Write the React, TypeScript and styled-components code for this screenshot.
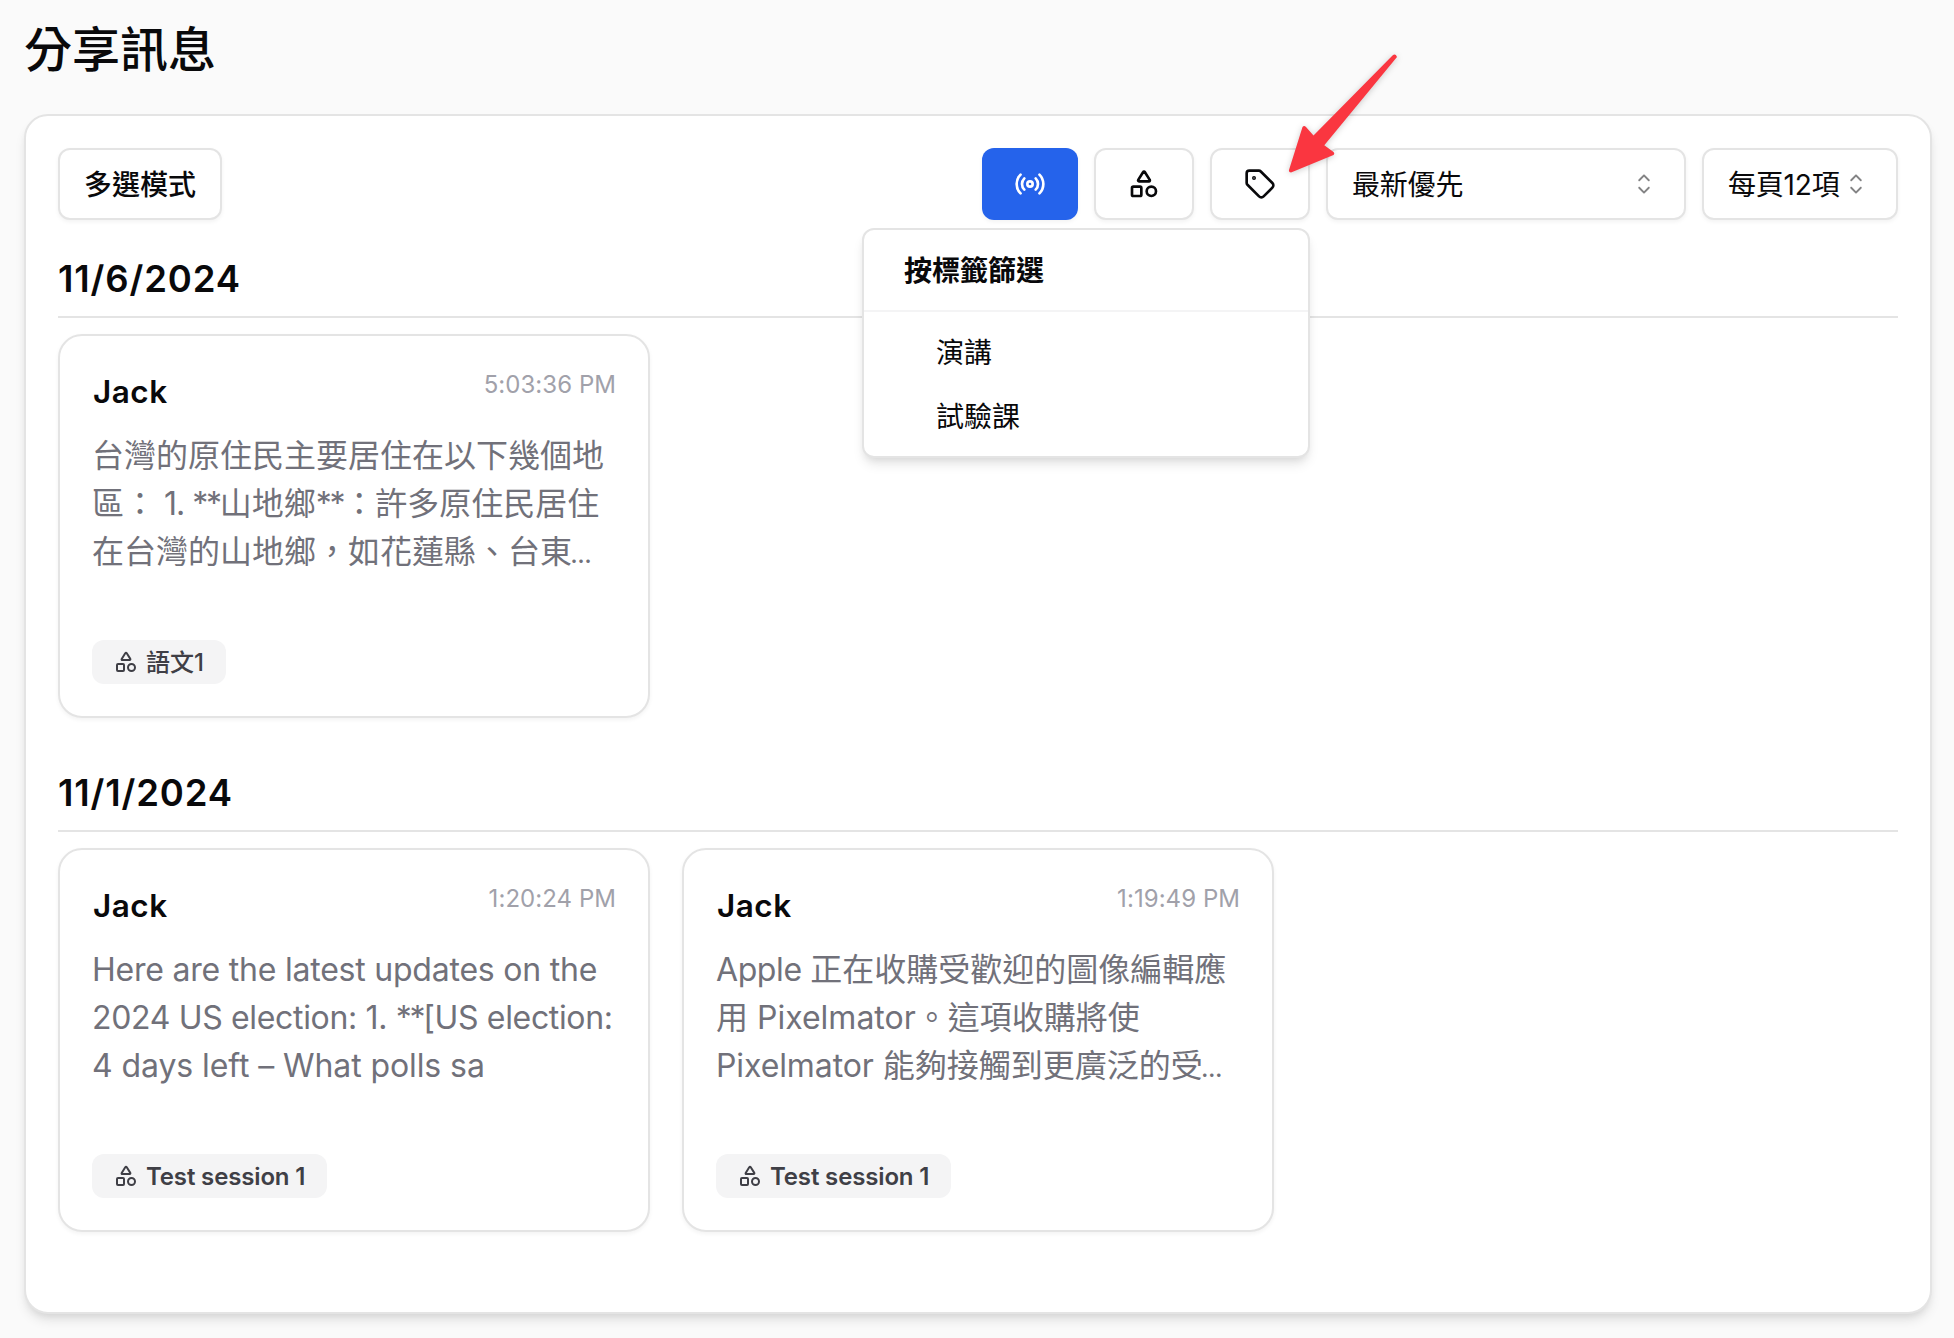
import React from "react";
import styled, { createGlobalStyle, css } from "styled-components";
import { Radio, Shapes, Tag } from "lucide-react";
import { RxCaretSort } from "react-icons/rx";

const GlobalStyle = createGlobalStyle`
  * { box-sizing: border-box; }
  body {
    margin: 0;
    background: #fafafa;
    color: #09090b;
    font-family: Inter, "Noto Sans CJK TC", sans-serif;
  }
`;

const Page = styled.main`
  position: relative;
  height: 1338px;
  padding: 18px 22px 24px 24px;
  display: flex;
  flex-direction: column;
`;

const Title = styled.h1`
  margin: 0 0 32px;
  font-size: 48px;
  line-height: 64px;
  font-weight: 500;
`;

const Panel = styled.section`
  height: 1200px;
  padding: 32px;
  background: #fff;
  border: 2px solid #e4e4e4;
  border-radius: 24px;
  box-shadow: 0 8px 12px -2px rgba(0, 0, 0, 0.1), 0 4px 8px -4px rgba(0, 0, 0, 0.1);
`;

const Toolbar = styled.div`
  display: flex;
  align-items: center;
  justify-content: space-between;
`;

const Filters = styled.div`
  display: flex;
  gap: 16px;
`;

const control = css`
  height: 72px;
  border: 2px solid #e4e4e4;
  border-radius: 12px;
  background: #fff;
  box-shadow: 0 2px 4px rgba(0, 0, 0, 0.05);
  font-family: inherit;
  font-size: 28px;
  color: #09090b;
  white-space: nowrap;
`;

const TextButton = styled.button`
  ${control}
  padding: 0 24px 2px;
  font-weight: 500;
`;

const IconButton = styled.button<{ $active?: boolean }>`
  ${control}
  display: flex;
  align-items: center;
  justify-content: center;
  width: 100px;
  padding: 0;
  ${(p) =>
    p.$active &&
    css`
      width: 96px;
      border: 0;
      color: #fff;
      background: #2563eb;
    `}
`;

const Select = styled.button<{ $width: number }>`
  ${control}
  display: flex;
  align-items: center;
  justify-content: space-between;
  width: ${(p) => p.$width}px;
  padding: 0 24px;
  letter-spacing: -0.2px;

  svg {
    flex: none;
    opacity: 0.5;
  }
`;

const SelectValue = styled.span`
  padding-bottom: 2px;
`;

const MenuAnchor = styled.div`
  position: relative;
`;

const Menu = styled.div`
  position: absolute;
  top: 80px;
  right: 0;
  z-index: 2;
  width: 448px;
  padding: 8px 0;
  background: #fff;
  border: 2px solid #e4e4e4;
  border-radius: 12px;
  box-shadow: 0 8px 12px -2px rgba(0, 0, 0, 0.1), 0 4px 8px -4px rgba(0, 0, 0, 0.1);
  font-size: 28px;
  line-height: 66px;
`;

const MenuLabel = styled.div`
  height: 64px;
  padding: 0 40px;
  font-weight: 600;
`;

const MenuSeparator = styled.div`
  height: 2px;
  margin: 8px 0;
  background: #f4f4f5;
`;

const MenuItem = styled.div`
  height: 64px;
  padding: 0 72px;
`;

const Group = styled.section`
  margin-top: 32px;

  & + & {
    margin-top: 48px;
  }
`;

const DateHeading = styled.h2`
  height: 66px;
  margin: 0 0 16px;
  border-bottom: 2px solid #e4e4e4;
  font-size: 36.5px;
  line-height: 54px;
  font-weight: 600;
  letter-spacing: 0.85px;
`;

const Cards = styled.div`
  display: grid;
  grid-template-columns: repeat(3, minmax(0, 1fr));
  gap: 32px;
`;

const CardBox = styled.article`
  display: flex;
  flex-direction: column;
  align-items: flex-start;
  height: 384px;
  padding: 32px;
  background: #fff;
  border: 2px solid #e4e4e4;
  border-radius: 24px;
  box-shadow: 0 2px 4px rgba(0, 0, 0, 0.05);
`;

const CardHeader = styled.header`
  display: flex;
  justify-content: space-between;
  align-items: flex-start;
  width: 100%;
  height: 64px;
`;

const Name = styled.h3`
  margin: 0;
  padding-left: 1px;
  font-size: 31.5px;
  line-height: 48px;
  font-weight: 600;
  letter-spacing: 0.5px;
`;

const Time = styled.time`
  padding-top: 1px;
  font-size: 24px;
  line-height: 32px;
  letter-spacing: 0.05px;
  color: #a1a1aa;
`;

const Body = styled.p`
  margin: 0;
  font-size: 32px;
  line-height: 48px;
  height: 48px;
  color: #71717a;
  white-space: pre;
`;

const Latin = styled.span<{ $spacing: number }>`
  letter-spacing: ${(p) => p.$spacing}px;
`;

const Stars = styled.span`
  letter-spacing: -2.3px;
`;

const Ellipsis = styled.span`
  margin-left: -1.5px;
  font-size: 22px;
  font-weight: 600;
`;

const Chip = styled.span`
  display: inline-flex;
  align-items: center;
  gap: 8px;
  height: 44px;
  margin-top: auto;
  padding: 0 22px;
  border-radius: 12px;
  background: #f4f4f5;
  color: #3f3f46;
  font-size: 24px;
  font-weight: 500;
`;

const ChipText = styled.span<{ $latin: boolean }>`
  ${(p) =>
    p.$latin
      ? css`
          font-weight: 600;
          letter-spacing: -0.15px;
        `
      : css`
          padding-bottom: 3px;
        `}
`;

const Arrow = styled.svg`
  position: absolute;
  left: 1270px;
  top: 40px;
  z-index: 3;
  filter: drop-shadow(0 1px 3px rgba(0, 0, 0, 0.2));
`;

type Line = { text: string; spacing?: number };
type Message = { time: string; lines: Line[]; session: string };

const groups: { date: string; messages: Message[] }[] = [
  {
    date: "11/6/2024",
    messages: [
      {
        time: "5:03:36 PM",
        lines: [
          { text: "台灣的原住民主要居住在以下幾個地" },
          { text: "區： 1. **山地鄉**：許多原住民居住", spacing: -1 },
          { text: "在台灣的山地鄉，如花蓮縣、台東…" },
        ],
        session: "語文1",
      },
    ],
  },
  {
    date: "11/1/2024",
    messages: [
      {
        time: "1:20:24 PM",
        lines: [
          { text: "Here are the latest updates on the", spacing: -0.22 },
          { text: "2024 US election: 1. **[US election:", spacing: -0.34 },
          { text: "4 days left – What polls sa", spacing: -0.09 },
        ],
        session: "Test session 1",
      },
      {
        time: "1:19:49 PM",
        lines: [
          { text: "Apple 正在收購受歡迎的圖像編輯應", spacing: -0.4 },
          { text: "用 Pixelmator。這項收購將使" },
          { text: "Pixelmator 能夠接觸到更廣泛的受…", spacing: -0.1 },
        ],
        session: "Test session 1",
      },
    ],
  },
];

function BodyLine({ text, spacing = 0 }: Line) {
  const runs = text.split(/(\*+|…|[\x20-\x29\x2b-\x7e–]+)/).filter(Boolean);
  return (
    <Body>
      {runs.map((run, i) => {
        if (run === "…") return <Ellipsis key={i}>{run}</Ellipsis>;
        if (run[0] === "*") return <Stars key={i}>{run}</Stars>;
        if (/^[\x20-\x7e–]/.test(run))
          return (
            <Latin key={i} $spacing={spacing}>
              {run}
            </Latin>
          );
        return run;
      })}
    </Body>
  );
}

function MessageCard({ time, lines, session }: Message) {
  return (
    <CardBox>
      <CardHeader>
        <Name>Jack</Name>
        <Time>{time}</Time>
      </CardHeader>
      {lines.map((line) => (
        <BodyLine key={line.text} {...line} />
      ))}
      <Chip>
        <Shapes size={24} />
        <ChipText $latin={/^[A-Z]/.test(session)}>{session}</ChipText>
      </Chip>
    </CardBox>
  );
}

export default function App() {
  return (
    <Page>
      <GlobalStyle />
      <Title>分享訊息</Title>
      <Panel>
        <Toolbar>
          <TextButton>多選模式</TextButton>
          <Filters>
            <IconButton $active>
              <Radio size={32} />
            </IconButton>
            <IconButton>
              <Shapes size={32} />
            </IconButton>
            <MenuAnchor>
              <IconButton>
                <Tag size={32} />
              </IconButton>
              <Menu>
                <MenuLabel>按標籤篩選</MenuLabel>
                <MenuSeparator />
                <MenuItem>演講</MenuItem>
                <MenuItem>試驗課</MenuItem>
              </Menu>
            </MenuAnchor>
            <Select $width={360}>
              <SelectValue>最新優先</SelectValue>
              <RxCaretSort size={32} />
            </Select>
            <Select $width={196}>
              <SelectValue>每頁12項</SelectValue>
              <RxCaretSort size={32} />
            </Select>
          </Filters>
        </Toolbar>
        {groups.map((group) => (
          <Group key={group.date}>
            <DateHeading>{group.date}</DateHeading>
            <Cards>
              {group.messages.map((m) => (
                <MessageCard key={m.time} {...m} />
              ))}
            </Cards>
          </Group>
        ))}
      </Panel>
      <Arrow width="150" height="150" viewBox="0 0 150 150" fill="#fa3640">
        <path d="M122.5 15.500Q125.500 13 127 17L54.300 105.300L63.500 112Q65 113.500 63.500 115L21 132.500Q18.500 132.500 19 130L32.500 87Q34 85 36 87L43.500 95.500Z" />
      </Arrow>
    </Page>
  );
}
